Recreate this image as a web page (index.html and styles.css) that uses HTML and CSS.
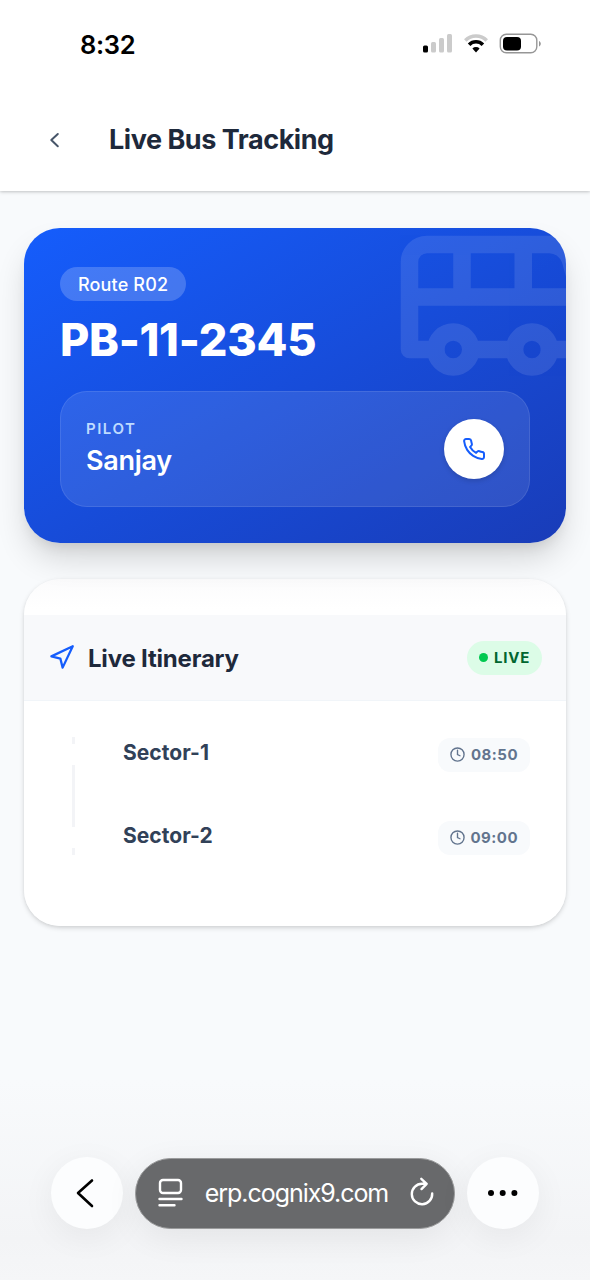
FILE: index.html
```html
<!DOCTYPE html>
<html lang="en">
<head>
<meta charset="utf-8">
<title>Live Bus Tracking</title>
<link rel="stylesheet" href="styles.css">
</head>
<body>
<div class="screen">
  <header class="top">
    <div class="status">
      <span class="clock">8:32</span>
      <svg class="status-icons" width="120" height="22" viewBox="0 0 120 22">
        <rect x="1" y="12.500" width="5" height="7" rx="1.500" fill="#000"/>
        <g fill="#cbcbcb"><rect x="9" y="9" width="5" height="10.500" rx="1.500"/><rect x="17" y="5" width="5" height="14.500" rx="1.500"/><rect x="25" y="1" width="5" height="18.500" rx="1.500"/></g>
        <g fill="none" stroke-width="3.600">
          <path d="M43.300 7.500a15 15 0 0 1 21.400 0" stroke="#cbcbcb"/>
          <path d="M47.100 11.700a9.600 9.600 0 0 1 13.800 0" stroke="#000"/>
        </g>
        <path d="M50.400 15.500a5.200 5.200 0 0 1 7.200 0L54 19.400z" fill="#000"/>
        <rect x="78.300" y="1.300" width="36.500" height="18.400" rx="6" fill="none" stroke="#969696" stroke-width="1.400"/>
        <rect x="81" y="4" width="18" height="13.500" rx="4" fill="#000"/>
        <path d="M117 8v5.500c2.400-1 2.400-4.500 0-5.500z" fill="#969696"/>
      </svg>
    </div>
    <div class="titlebar">
      <svg class="back" width="24" height="24" viewBox="0 0 24 24"><path d="M15.800 6 9.300 12l6.500 6.200"/></svg>
      <h1>Live Bus Tracking</h1>
    </div>
  </header>

  <main>
    <section class="bus-card">
      <svg class="bus-art" viewBox="0 0 24 24">
        <path d="M8 6v6M15 6v6M2 12h19.600M18 18h3s.5-1.700.8-2.800c.1-.4.2-.8.2-1.200 0-.4-.1-.8-.2-1.200l-1.400-5C20.100 6.800 19.100 6 18 6H4a2 2 0 0 0-2 2v10h3M9 18h5"/>
        <circle cx="7" cy="18" r="2"/><circle cx="16" cy="18" r="2"/>
      </svg>
      <span class="route">Route R02</span>
      <h2>PB-11-2345</h2>
      <div class="pilot">
        <div class="pilot-info">
          <span class="label">PILOT</span>
          <span class="name">Sanjay</span>
        </div>
        <div class="call">
          <svg width="24" height="24" viewBox="0 0 24 24"><path d="M22 16.920v3a2 2 0 0 1-2.180 2 19.790 19.790 0 0 1-8.630-3.070 19.500 19.500 0 0 1-6-6 19.790 19.790 0 0 1-3.070-8.670A2 2 0 0 1 4.110 2h3a2 2 0 0 1 2 1.720 12.840 12.840 0 0 0 .7 2.810 2 2 0 0 1-.45 2.110L8.090 9.910a16 16 0 0 0 6 6l1.270-1.270a2 2 0 0 1 2.110-.45 12.840 12.840 0 0 0 2.810.7A2 2 0 0 1 22 16.920z"/></svg>
        </div>
      </div>
    </section>

    <section class="itinerary">
      <div class="itinerary-head">
        <svg class="nav" width="27" height="27" viewBox="0 0 24 24"><path d="M3 11 22 2 13 21 11 13z"/></svg>
        <h3>Live Itinerary</h3>
        <span class="live"><i class="dot"></i>LIVE</span>
      </div>
      <div class="stops">
        <div class="rail"><i class="tick"></i><i class="line"></i><i class="tick"></i></div>
        <div class="stop-list">
          <div class="stop">
            <span class="stop-name">Sector-1</span>
            <span class="time"><svg width="15" height="15" viewBox="0 0 24 24"><circle cx="12" cy="12" r="10.500"/><path d="M12 5v7l4 2"/></svg>08:50</span>
          </div>
          <div class="stop">
            <span class="stop-name">Sector-2</span>
            <span class="time"><svg width="15" height="15" viewBox="0 0 24 24"><circle cx="12" cy="12" r="10.500"/><path d="M12 5v7l4 2"/></svg>09:00</span>
          </div>
        </div>
      </div>
    </section>
  </main>

  <nav class="browser">
    <div class="round"><svg width="72" height="72" viewBox="0 0 72 72"><path class="chev" d="M41 23.500 27 36l14 13"/></svg></div>
    <div class="address">
      <svg class="page" width="26" height="32" viewBox="0 0 26 32"><rect x="2" y="3" width="21" height="13" rx="3"/><path d="M1.500 22h22M1.500 28.300h15"/></svg>
      <span class="url">erp.cognix9.com</span>
      <svg class="reload" width="26" height="32" viewBox="0 0 26 32"><path d="M23.200 16.500A10.200 10.200 0 1 1 13 6.800h4.500M12.300 1.800l5.400 5-5.200 5.300"/></svg>
    </div>
    <div class="round"><svg width="72" height="72" viewBox="0 0 72 72"><circle cx="24" cy="36" r="3"/><circle cx="35.700" cy="36" r="3"/><circle cx="47.400" cy="36" r="3"/></svg></div>
  </nav>
</div>
</body>
</html>
```
FILE: styles.css
```css
* { box-sizing: border-box; }
body { margin: 0; font-family: Inter, "Liberation Sans", sans-serif; }
h1, h2, h3 { margin: 0; }
svg { display: block; flex: none; }

.screen {
  width: 590px;
  height: 1280px;
  overflow: hidden;
  display: flex;
  flex-direction: column;
  background: linear-gradient(#f8fafc 0, #f8fafc 1080px, #f3f4f6 1240px, #f5f6f8 1280px);
}

.top {
  height: 191px;
  flex: none;
  background: #fff;
  box-shadow: 0 1px 4px rgba(0, 0, 0, .16), 0 1px 2px rgba(0, 0, 0, .08);
}
.status {
  height: 88px;
  padding: 0 48px 0 80px;
  display: flex;
  align-items: center;
  justify-content: space-between;
}
.clock { font-size: 25.500px; font-weight: 600; letter-spacing: -.3px; color: #000; }
.titlebar { height: 103px; padding-left: 42px; display: flex; align-items: center; gap: 43px; }
.back path { fill: none; stroke: #475569; stroke-width: 2; stroke-linecap: round; stroke-linejoin: round; }
h1 { font-size: 27px; font-weight: 700; letter-spacing: -.46px; color: #1e293b; }

main { padding: 37px 24px 0; display: flex; flex-direction: column; gap: 36px; }

.bus-card {
  position: relative;
  height: 315px;
  padding: 39px 36px 0;
  border-radius: 36px;
  overflow: hidden;
  background: linear-gradient(to bottom right, #155dfc, #193cb8);
  box-shadow: 0 18px 32px -4px rgba(0, 0, 0, .16), 0 8px 14px -6px rgba(0, 0, 0, .1);
  color: #fff;
  display: flex;
  flex-direction: column;
  align-items: flex-start;
}
.bus-art {
  position: absolute;
  top: -36px;
  right: -36px;
  width: 210px;
  height: 210px;
  opacity: .1;
  fill: none;
  stroke: #fff;
  stroke-width: 2;
  stroke-linecap: round;
  stroke-linejoin: round;
}
.route {
  height: 34px;
  padding: 0 18px;
  border-radius: 17px;
  background: rgba(255, 255, 255, .2);
  font-size: 18px;
  font-weight: 500;
  letter-spacing: .15px;
  line-height: 35px;
}
h2 { margin-top: 12px; font-size: 45px; line-height: 54px; font-weight: 800; letter-spacing: -.3px; }
.pilot {
  align-self: stretch;
  margin-top: 24px;
  height: 116px;
  padding: 0 25px 0 25px;
  border: 1.500px solid rgba(255, 255, 255, .1);
  border-radius: 27px;
  background: rgba(255, 255, 255, .1);
  display: flex;
  align-items: center;
  justify-content: space-between;
}
.pilot-info { display: flex; flex-direction: column; margin-top: 1px; }
.label { font-size: 15px; line-height: 22px; font-weight: 600; letter-spacing: 1.500px; color: #bedbff; }
.name { font-size: 27px; line-height: 42px; font-weight: 600; letter-spacing: -.3px; }
.call {
  width: 60px;
  height: 60px;
  border-radius: 50%;
  background: #fff;
  box-shadow: 0 2px 5px rgba(0, 0, 0, .15);
  display: grid;
  place-items: center;
}
.call path { fill: none; stroke: #155dfc; stroke-width: 2; stroke-linejoin: round; stroke-linecap: round; }

.itinerary {
  height: 347px;
  padding-top: 36px;
  border-radius: 36px;
  background: linear-gradient(#fbfbfc, #fff 30px);
  box-shadow: 0 2px 5px rgba(0, 0, 0, .15), 0 1px 3px rgba(0, 0, 0, .04);
}
.itinerary-head {
  height: 86px;
  padding: 0 24px;
  display: flex;
  align-items: center;
  background: #f8f9fb;
  border-bottom: 1.500px solid #f1f5f9;
}
.nav path { fill: none; stroke: #155dfc; stroke-width: 2; stroke-linejoin: round; }
h3 { margin: 2px 0 0 13px; font-size: 24px; font-weight: 700; letter-spacing: -.2px; color: #1e293b; }
.live {
  margin-left: auto;
  height: 34px;
  padding: 0 12px;
  border-radius: 17px;
  display: flex;
  align-items: center;
  gap: 6px;
  background: #dcfce7;
  color: #016630;
  font-size: 15px;
  font-weight: 700;
  letter-spacing: .75px;
}
.dot { width: 9px; height: 9px; border-radius: 50%; background: #00c950; }
.stops { display: flex; padding: 36px 36px 0 48px; }
.rail { width: 3px; display: flex; flex-direction: column; justify-content: space-between; height: 118px; }
.rail i { background: #f3f4f7; }
.tick { height: 7px; }
.line { height: 62px; }
.stop-list { flex: 1; margin-left: 48px; display: flex; flex-direction: column; gap: 47px; }
.stop { height: 36px; display: flex; align-items: center; justify-content: space-between; }
.stop-name { font-size: 21px; line-height: 30px; font-weight: 700; letter-spacing: .05px; color: #314158; margin-top: -4px; }
.time {
  height: 34px;
  padding: 0 12px;
  margin-top: -1px;
  border-radius: 12px;
  display: flex;
  align-items: center;
  gap: 6px;
  background: #f8fafc;
  color: #62748e;
  font-size: 15px;
  font-weight: 700;
  letter-spacing: .48px;
}
.time svg { fill: none; stroke: #62748e; stroke-width: 2.200; stroke-linecap: round; }

.browser { margin-top: auto; padding: 0 51px 51px; display: flex; align-items: center; gap: 12px; }
.round {
  width: 72px;
  height: 72px;
  flex: none;
  border-radius: 50%;
  background: #fcfdfe;
  box-shadow: 0 8px 34px rgba(0, 0, 0, .06);
}
.chev { fill: none; stroke: #000; stroke-width: 2.600; stroke-linecap: round; stroke-linejoin: round; }
.address {
  flex: 1;
  height: 71px;
  padding: 0 19px 0 22px;
  border: 1px solid #9a9b9c;
  border-radius: 36px;
  background: #68696b;
  box-shadow: 0 8px 34px rgba(0, 0, 0, .07);
  color: #fff;
  display: flex;
  align-items: center;
  justify-content: space-between;
}
.address svg { fill: none; stroke: #fff; stroke-width: 2.400; stroke-linecap: round; stroke-linejoin: round; }
.url { font-size: 25px; letter-spacing: -1.050px; white-space: nowrap; }
```
